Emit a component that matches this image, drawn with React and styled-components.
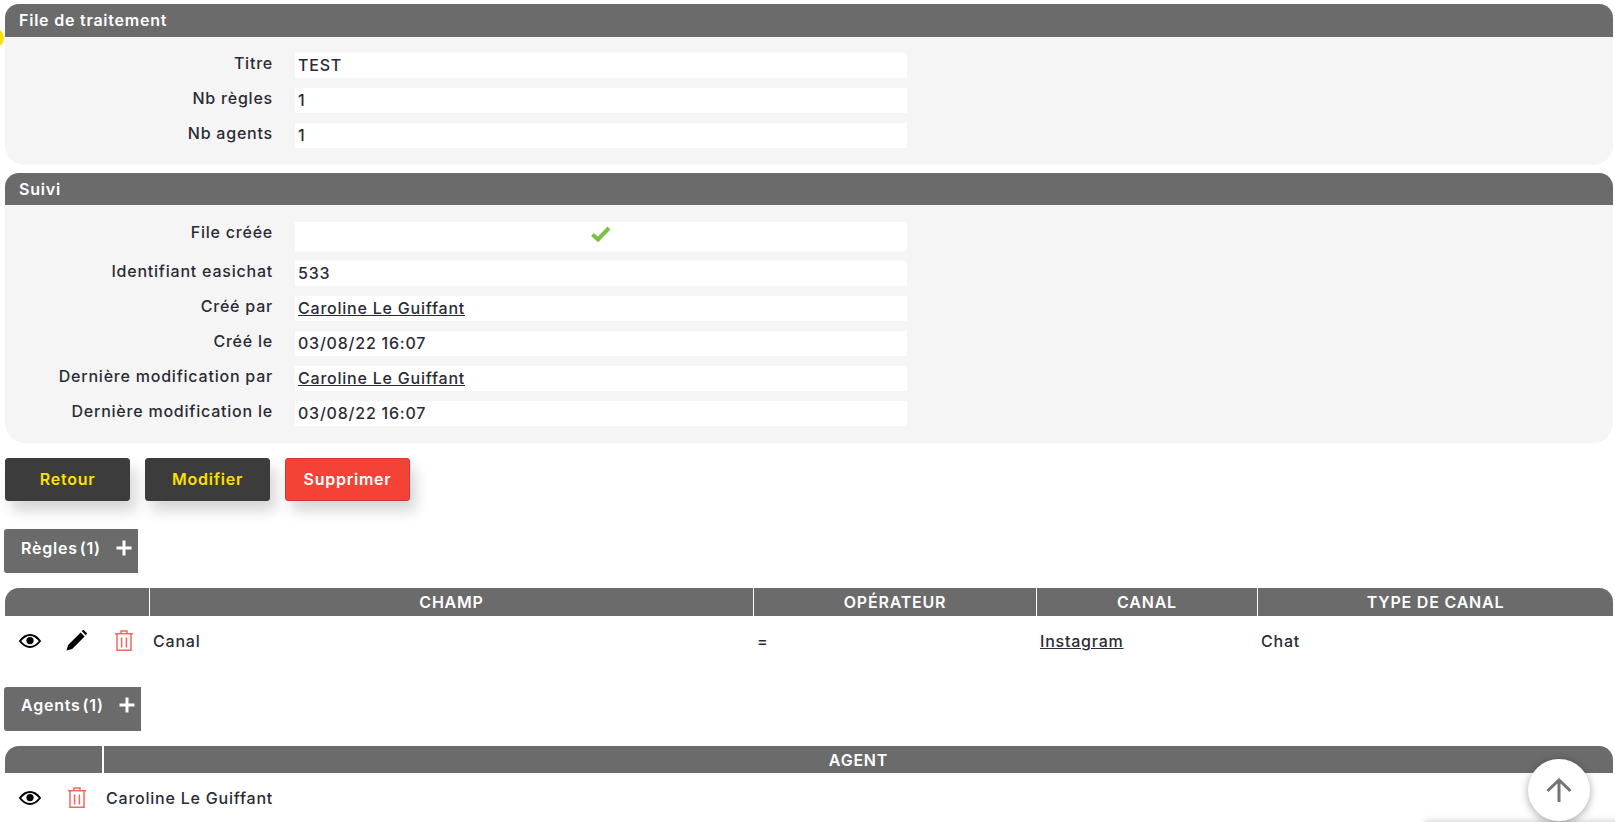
import React from 'react'
import styled, { createGlobalStyle } from 'styled-components'

const GlobalStyle = createGlobalStyle`
  html, body {
    margin: 0;
    height: 100%;
    overflow: hidden;
    background: #fff;
  }
  body {
    font-family: Inter, "Liberation Sans", sans-serif;
    color: #2b2b36;
    font-size: 16px;
    letter-spacing: 0.78px;
  }
`

const Page = styled.div`
  padding: 4px 2px 0 5px;
  height: 818px;
  overflow: hidden;
`

const YellowDot = styled.span`
  position: fixed;
  left: -16px;
  top: 28px;
  width: 20px;
  height: 20px;
  border-radius: 50%;
  background: #ffe000;
`

const FooterEdge = styled.div`
  position: fixed;
  left: 1425px;
  right: -20px;
  top: 823px;
  height: 20px;
  box-shadow: 0 0 8px rgba(0, 0, 0, 0.3);
`

const Panel = styled.section`
  background: #f5f5f5;
  border-radius: 14px 14px 20px 20px;
  margin-bottom: 8px;
`

const PanelTitle = styled.h2`
  margin: 0;
  box-sizing: border-box;
  height: ${(p) => p.$height}px;
  padding: 0 0 ${(p) => p.$lift}px 14px;
  display: flex;
  align-items: center;
  background: #6b6b6b;
  color: #fff;
  font-size: 16px;
  font-weight: 600;
  border-radius: 14px 14px 0 0;
`

const Fields = styled.div`
  display: flex;
  flex-direction: column;
  gap: 10px;
  padding: ${(p) => p.$top}px 0 17px;
`

const FieldRow = styled.div`
  display: grid;
  grid-template-columns: 268px 612px;
  column-gap: 22px;
`

const Label = styled.div`
  text-align: right;
  font-size: 16px;
  font-weight: 500;
  line-height: 20px;
`

const Value = styled.div`
  background: #fff;
  height: ${(p) => (p.$tall ? '29px' : '25px')};
  line-height: 25px;
  padding: 0 3px;
  font-size: 16px;
  font-weight: 500;
  text-align: ${(p) => (p.$center ? 'center' : 'left')};
`

const CheckWrap = styled.span`
  display: flex;
  justify-content: center;
  padding-top: 4px;
`

const TextLink = styled.a`
  color: inherit;
  text-decoration: underline;
  cursor: pointer;
`

const Actions = styled.div`
  display: flex;
  gap: 15px;
  margin: 15px 0 28px;
`

const ActionButton = styled.button`
  width: 125px;
  height: 43px;
  padding: 0 0 1px;
  border-radius: 3px;
  border: 1px solid ${(p) => (p.$danger ? '#d9303a' : '#3c3c3c')};
  background: ${(p) => (p.$danger ? '#f44336' : '#3c3c3c')};
  color: ${(p) => (p.$danger ? '#fff' : '#ffe000')};
  font-family: inherit;
  font-size: 16px;
  font-weight: 600;
  letter-spacing: 0.75px;
  box-shadow: 6px 10px 14px rgba(0, 0, 0, 0.16);
`

const SectionTab = styled.div`
  display: inline-flex;
  align-items: center;
  justify-content: space-between;
  box-sizing: border-box;
  width: ${(p) => p.$width}px;
  height: 44px;
  margin-left: -1px;
  padding: 0 6px ${(p) => p.$lift}px 17px;
  background: #6b6b6b;
  color: #fff;
  font-size: 16px;
  font-weight: 600;
  word-spacing: -3px;
  border-radius: 3px 0 0 3px;
`

const TableWrap = styled.div`
  margin: 15px 0 22px;
`

const DataTable = styled.table`
  width: 100%;
  table-layout: fixed;
  border-collapse: separate;
  border-spacing: 0;
`

const HeadCell = styled.th`
  height: ${(p) => p.$height}px;
  padding: 0;
  background: #6b6b6b;
  color: #fff;
  font-size: 16px;
  font-weight: 600;
  text-transform: uppercase;
  border-left: ${(p) => p.$sep}px solid #fff;
  &:first-child {
    border-left: 0;
    border-top-left-radius: 14px;
  }
  &:last-child {
    border-top-right-radius: 14px;
  }
`

const BodyCell = styled.td`
  height: 49px;
  padding: 0 3px 0 4px;
  font-size: 16px;
  font-weight: 500;
`

const IconRow = styled.div`
  display: flex;
  align-items: center;
  padding-left: 10px;
  gap: ${(p) => p.$gap}px;
`

const ScrollTop = styled.button`
  position: fixed;
  left: 1528px;
  top: 759px;
  width: 62px;
  height: 62px;
  border: 0;
  padding: 0;
  border-radius: 50%;
  background: #fff;
  box-shadow: 0 2px 8px rgba(0, 0, 0, 0.35);
  display: flex;
  align-items: center;
  justify-content: center;
`

const EyeIcon = () => (
  <svg width="22" height="14" viewBox="0 0 22 14">
    <path d="M1 7C4 3 7 1 11 1s7 2 10 6c-3 4-6 6-10 6S4 11 1 7z" fill="none" stroke="#000" strokeWidth="2" />
    <circle cx="11" cy="6.6" r="3.6" fill="#000" />
  </svg>
)

const PencilIcon = () => (
  <svg width="24" height="21" viewBox="0 0 24 21">
    <path d="M0.5 20.5l1.6-5.6L14.6 2.4l4 4L6.1 18.9z" fill="#000" />
    <path d="M15.8 1.2l1-0.9c.4-.3.9-.3 1.2 0l2.7 2.7c.3.3.3.8 0 1.2l-.9 1z" fill="#000" />
  </svg>
)

const TrashIcon = () => (
  <svg width="18" height="21" viewBox="0 0 18 21" fill="none" stroke="#f4675c" strokeWidth="1.5">
    <path d="M0 3.7h18" />
    <path d="M6 3.5V1h6v2.5" />
    <path d="M2 4v16.3h14V4" />
    <path d="M6.6 7.5v10M11.4 7.5v10" />
  </svg>
)

const PlusIcon = () => (
  <svg width="16" height="16" viewBox="0 0 16 16">
    <path d="M8 0.5v15M0.5 8h15" stroke="#fff" strokeWidth="3" />
  </svg>
)

const CheckIcon = () => (
  <svg width="20" height="17" viewBox="0 0 20 17">
    <path d="M1.5 8.5l5.5 5L18 2" fill="none" stroke="#78c043" strokeWidth="4" />
  </svg>
)

const ArrowUpIcon = () => (
  <svg width="26" height="24" viewBox="0 0 26 24">
    <path d="M13 24V2M1.5 13L13 2l11.5 11" fill="none" stroke="#757575" strokeWidth="3" />
  </svg>
)

const fileRows = [
  ['Titre', 'TEST'],
  ['Nb règles', '1'],
  ['Nb agents', '1'],
]

export default function App() {
  return (
    <Page>
      <GlobalStyle />
      <YellowDot />
      <FooterEdge />

      <Panel>
        <PanelTitle $height={33} $lift={2}>File de traitement</PanelTitle>
        <Fields $top={16}>
          {fileRows.map(([label, value]) => (
            <FieldRow key={label}>
              <Label>{label}</Label>
              <Value>{value}</Value>
            </FieldRow>
          ))}
        </Fields>
      </Panel>

      <Panel>
        <PanelTitle $height={32} $lift={0}>Suivi</PanelTitle>
        <Fields $top={17}>
          <FieldRow>
            <Label>File créée</Label>
            <Value $tall $center><CheckWrap><CheckIcon /></CheckWrap></Value>
          </FieldRow>
          <FieldRow>
            <Label>Identifiant easichat</Label>
            <Value>533</Value>
          </FieldRow>
          <FieldRow>
            <Label>Créé par</Label>
            <Value><TextLink>Caroline Le Guiffant</TextLink></Value>
          </FieldRow>
          <FieldRow>
            <Label>Créé le</Label>
            <Value>03/08/22 16:07</Value>
          </FieldRow>
          <FieldRow>
            <Label>Dernière modification par</Label>
            <Value><TextLink>Caroline Le Guiffant</TextLink></Value>
          </FieldRow>
          <FieldRow>
            <Label>Dernière modification le</Label>
            <Value>03/08/22 16:07</Value>
          </FieldRow>
        </Fields>
      </Panel>

      <Actions>
        <ActionButton>Retour</ActionButton>
        <ActionButton>Modifier</ActionButton>
        <ActionButton $danger>Supprimer</ActionButton>
      </Actions>

      <SectionTab $width={134} $lift={6}>Règles (1) <PlusIcon /></SectionTab>
      <TableWrap>
        <DataTable>
          <colgroup>
            <col style={{ width: 144 }} />
            <col style={{ width: 604 }} />
            <col style={{ width: 283 }} />
            <col style={{ width: 221 }} />
            <col />
          </colgroup>
          <thead>
            <tr>
              <HeadCell $height={28} $sep={1} />
              <HeadCell $height={28} $sep={1}>Champ</HeadCell>
              <HeadCell $height={28} $sep={1}>Opérateur</HeadCell>
              <HeadCell $height={28} $sep={1}>Canal</HeadCell>
              <HeadCell $height={28} $sep={1}>Type de canal</HeadCell>
            </tr>
          </thead>
          <tbody>
            <tr>
              <BodyCell>
                <IconRow $gap={25}><EyeIcon /><PencilIcon /><TrashIcon /></IconRow>
              </BodyCell>
              <BodyCell>Canal</BodyCell>
              <BodyCell>=</BodyCell>
              <BodyCell><TextLink>Instagram</TextLink></BodyCell>
              <BodyCell>Chat</BodyCell>
            </tr>
          </tbody>
        </DataTable>
      </TableWrap>

      <SectionTab $width={137} $lift={8}>Agents (1) <PlusIcon /></SectionTab>
      <TableWrap>
        <DataTable>
          <colgroup>
            <col style={{ width: 97 }} />
            <col />
          </colgroup>
          <thead>
            <tr>
              <HeadCell $height={27} $sep={2} />
              <HeadCell $height={27} $sep={2}>Agent</HeadCell>
            </tr>
          </thead>
          <tbody>
            <tr>
              <BodyCell>
                <IconRow $gap={27}><EyeIcon /><TrashIcon /></IconRow>
              </BodyCell>
              <BodyCell>Caroline Le Guiffant</BodyCell>
            </tr>
          </tbody>
        </DataTable>
      </TableWrap>

      <ScrollTop><ArrowUpIcon /></ScrollTop>
    </Page>
  )
}
